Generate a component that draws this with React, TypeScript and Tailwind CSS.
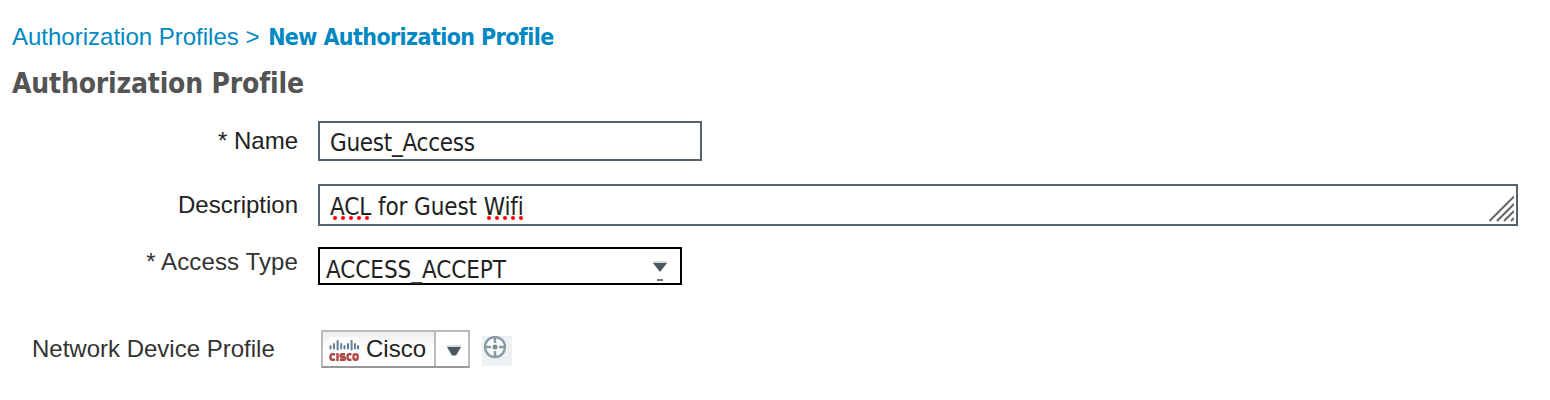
import type { ReactNode } from "react";

const tahoma = "font-['DejaVu_Sans_Condensed','DejaVu_Sans',sans-serif] [font-stretch:condensed] [font-variant-ligatures:none]";

function Misspelled({ children }: { children: ReactNode }) {
  return (
    <span className="relative">
      {children}
      <svg className="absolute bottom-px left-[3px]" width="36" height="4" fill="#f00">
        {[2, 10, 18, 26, 34].map((x) => (
          <circle key={x} cx={x} cy="2" r="2" />
        ))}
      </svg>
    </span>
  );
}

function CiscoLogo() {
  return (
    <svg width="30" height="25" viewBox="0 0 30 25" className="bg-white">
      <g stroke="#5f8199" strokeWidth="2" strokeLinecap="round">
        <path d="M1.500 9v2.500M5 7v4.500M8.600 4v8.500M12.200 7v4.500M15.500 9v2.500M19 7v4.500M22.600 4v8.500M26 7v4.500M29 9v2.500" />
      </g>
      <g stroke="#b04846" strokeWidth="2.400" fill="none">
        <path d="M6 17.200H3.500a2 2 0 0 0-2 2v1.600a2 2 0 0 0 2 2H6M8.500 16v8M16 17.200h-3q-1.500 0-1.500 1.400T13 20h1.500q1.300 0 1.300 1.400t-1.300 1.400H11M22.500 17.200H20.500a2 2 0 0 0-2 2v1.600a2 2 0 0 0 2 2H22.500" />
        <rect x="24.500" y="17.200" width="4.200" height="5.600" rx="2" />
      </g>
    </svg>
  );
}

export default function App() {
  return (
    <main className="h-[400px] w-[1550px] overflow-hidden bg-white pt-[21px] pl-3 font-['Liberation_Sans',Arial,sans-serif] text-2xl text-[#222]">
      <nav className="flex h-8 items-center whitespace-pre text-[#0088c2]">
        <span>Authorization Profiles &gt; </span>
        <b className={`${tahoma} ml-[2px] text-[23px] tracking-[-0.6px]`}>New Authorization Profile</b>
      </nav>
      <h1 className={`${tahoma} mt-[13px] h-[35px] text-[28px] leading-9 font-bold tracking-[-0.18px] text-[#545454]`}>Authorization Profile</h1>

      <form className="mt-5 flex flex-col">
        <div className="flex h-10">
          <label className="mr-5 w-[286px] text-right leading-10">* Name</label>
          <div className={`${tahoma} w-[384px] border-2 border-[#53646e] pl-[10px] leading-10 tracking-[-0.28px]`}>Guest_Access</div>
        </div>
        <div className="mt-[23px] flex h-[42px]">
          <label className="mr-5 w-[286px] text-right leading-[42px]">Description</label>
          <div className={`${tahoma} flex w-[1200px] justify-between border-2 border-[#53646e] pl-[10px] leading-[42px] tracking-[-0.1px]`}>
            <span>
              <Misspelled>ACL</Misspelled> for Guest <Misspelled>Wifi</Misspelled>
            </span>
            <svg className="mt-[9px] mr-[2px]" width="25" height="27" stroke="#666" strokeWidth="2">
              <path d="M0.500 26L25 1.500M8 26L25 9M15 26L25 16M22 26L25 23" />
            </svg>
          </div>
        </div>
        <div className="mt-[21px] flex h-[38px]">
          <label className="mr-5 w-[286px] text-right leading-[30px] tracking-[0.12px] text-[#333]">* Access Type</label>
          <div className={`${tahoma} flex w-[364px] justify-between border-2 border-black pr-3 pl-[6px] leading-[42px] tracking-[-0.06px]`}>
            <span>ACCESS_ACCEPT</span>
            <svg className="mt-[12px]" width="16" height="22">
              <path d="M1 1H15" stroke="#d8dbdc" strokeWidth="2" />
              <path d="M1 2H15L8 11Z" fill="#4b565e" />
              <path d="M5 19H11" stroke="#777" strokeWidth="2" />
            </svg>
          </div>
        </div>
        <div className="mt-[45px] flex h-[38px]">
          <label className="w-[309px] pl-5 leading-[37px] text-[#333]">Network Device Profile</label>
          <div className="flex w-[149px] border-2 border-[#bbb] border-b-[#999]">
            <div className="flex flex-1 items-center bg-linear-to-b from-[#eee] to-white to-50% pl-[6px]">
              <CiscoLogo />
              <span className="ml-[7px] leading-[34px]">Cisco</span>
            </div>
            <div className="flex w-[34px] items-start justify-center border-l-2 border-[#bbb] pt-[13px] pl-[3px]">
              <svg width="14" height="12">
                <path d="M0 1H14" stroke="#d8dbdc" strokeWidth="2" />
                <path d="M0 2H14L9 10.500H5Z" fill="#4b565e" />
              </svg>
            </div>
          </div>
          <svg className="mt-[6px] ml-3 bg-[#edf1f4]" width="30" height="30" fill="none" stroke="#8b9aa3">
            <circle cx="13" cy="11" r="10" fill="#f8fafb" strokeWidth="2.300" />
            <path d="M13 1v6M13 15v6M3 11h6M17 11h6" strokeWidth="2.500" />
            <circle cx="13" cy="11" r="2.500" fill="#7d8e98" stroke="none" />
          </svg>
        </div>
      </form>
    </main>
  );
}
